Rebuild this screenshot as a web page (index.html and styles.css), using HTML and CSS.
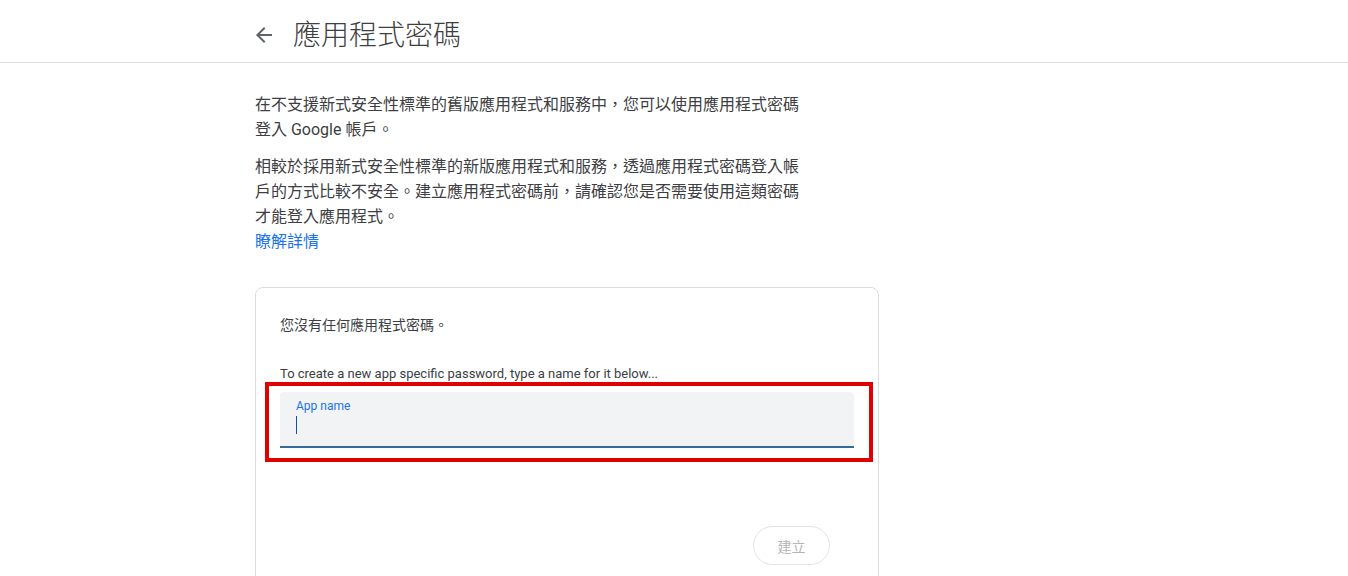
FILE: index.html
```html
<!DOCTYPE html>
<html lang="zh-Hant">
<head>
<meta charset="utf-8">
<title>應用程式密碼</title>
<link rel="stylesheet" href="styles.css">
</head>
<body>
<header class="topbar">
  <div class="wrap topbar-inner">
    <span class="back" aria-label="返回">
      <svg viewBox="0 0 24 24" width="24" height="24"><path d="M20 11H7.83l5.59-5.59L12 4l-8 8 8 8 1.41-1.41L7.83 13H20v-2z" fill="#5f6368"/></svg>
    </span>
    <h1 class="title">應用程式密碼</h1>
  </div>
</header>
<main class="wrap">
  <div class="col">
    <p class="intro">在不支援新式安全性標準的舊版應用程式和服務中，您可以使用應用程式密碼登入 Google 帳戶。</p>
    <p class="intro last">相較於採用新式安全性標準的新版應用程式和服務，透過應用程式密碼登入帳戶的方式比較不安全。建立應用程式密碼前，請確認您是否需要使用這類密碼才能登入應用程式。<br><a class="link" href="#">瞭解詳情</a></p>

    <section class="card">
      <p class="empty">您沒有任何應用程式密碼。</p>
      <p class="hint">To create a new app specific password, type a name for it below...</p>
      <div class="field-wrap">
        <div class="field">
          <span class="label">App name</span>
          <span class="caret"></span>
        </div>
        <div class="highlight"></div>
      </div>
      <div class="actions">
        <button class="btn" type="button">建立</button>
      </div>
    </section>
  </div>
</main>
</body>
</html>
```

FILE: styles.css
```css
html, body {
  margin: 0;
  padding: 0;
  background: #fff;
}
body {
  font-family: Roboto, "Noto Sans CJK TC", sans-serif;
  color: #3c4043;
}
.wrap {
  width: 838px;
  margin: 0 auto;
}
.topbar {
  border-bottom: 1px solid #dadce0;
  height: 62px;
}
.topbar-inner {
  display: flex;
  align-items: center;
  height: 62px;
}
.back {
  display: flex;
  width: 24px;
  height: 24px;
  margin-left: -3px;
  margin-top: 8px;
}
.title {
  margin: 10px 0 0 17px;
  font-weight: 300;
  font-size: 28px;
  line-height: 36px;
  color: #3c4043;
}
.col {
  width: 624px;
  padding-top: 29px;
}
.intro {
  margin: 0 0 12px;
  font-size: 16px;
  line-height: 25px;
  color: #3c4043;
  width: 548px;
}
.intro.last {
  margin-bottom: 33px;
}
.link {
  color: #1a73e8;
  text-decoration: none;
}
.card {
  border: 1px solid #dadce0;
  border-radius: 8px;
  padding: 26px 24px 0;
  height: 320px;
}
.empty {
  margin: 0;
  font-size: 14px;
  line-height: 22px;
  color: #3c4043;
}
.hint {
  margin: 28px 0 4px;
  font-size: 13px;
  line-height: 20px;
  color: #3c4043;
}
.field-wrap {
  position: relative;
  margin-top: 8px;
}
.field {
  background: #f1f3f4;
  border-radius: 4px 4px 0 0;
  border-bottom: 2px solid #37699b;
  height: 54px;
  padding: 0 16px;
  display: flex;
  flex-direction: column;
}
.label {
  font-size: 12px;
  line-height: 16px;
  color: #1a73e8;
  margin-top: 6px;
}
.caret {
  width: 1px;
  height: 18px;
  background: #174ea6;
  margin-top: 2px;
}
.highlight {
  position: absolute;
  left: -15px;
  right: -19px;
  top: -10px;
  bottom: -14px;
  border: 4px solid #e00000;
}
.actions {
  display: flex;
  justify-content: flex-end;
  margin-top: 78px;
  padding-right: 24px;
}
.btn {
  width: 77px;
  height: 39px;
  border: 1px solid #e3e3e3;
  border-radius: 20px;
  background: #fff;
  color: #b5b5b5;
  font-family: Roboto, "Noto Sans CJK TC", sans-serif;
  font-size: 14px;
  padding: 0;
}
```
